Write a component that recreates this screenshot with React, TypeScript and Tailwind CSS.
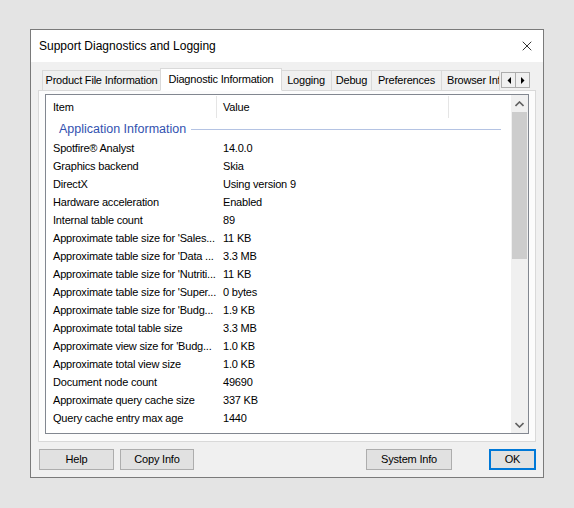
import { X } from 'lucide-react';

type Row = { item: string; value: string };

const rows: Row[] = [
  { item: 'Spotfire® Analyst', value: '14.0.0' },
  { item: 'Graphics backend', value: 'Skia' },
  { item: 'DirectX', value: 'Using version 9' },
  { item: 'Hardware acceleration', value: 'Enabled' },
  { item: 'Internal table count', value: '89' },
  { item: "Approximate table size for 'Sales...", value: '11 KB' },
  { item: "Approximate table size for 'Data ...", value: '3.3 MB' },
  { item: "Approximate table size for 'Nutriti...", value: '11 KB' },
  { item: "Approximate table size for 'Super...", value: '0 bytes' },
  { item: "Approximate table size for 'Budg...", value: '1.9 KB' },
  { item: 'Approximate total table size', value: '3.3 MB' },
  { item: "Approximate view size for 'Budg...", value: '1.0 KB' },
  { item: 'Approximate total view size', value: '1.0 KB' },
  { item: 'Document node count', value: '49690' },
  { item: 'Approximate query cache size', value: '337 KB' },
  { item: 'Query cache entry max age', value: '1440' },
];

const tabs = [
  { label: 'Product File Information', w: 'w-[119px]' },
  { label: 'Diagnostic Information', w: 'w-[122px]', active: true },
  { label: 'Logging', w: 'w-[52px]' },
  { label: 'Debug', w: 'w-[41px]' },
  { label: 'Preferences', w: 'w-[71px]' },
  { label: 'Browser Information', w: 'w-[59px]', clipped: true },
];

function Tab({ label, w, active, clipped }: { label: string; w: string; active?: boolean; clipped?: boolean }) {
  if (active) {
    return (
      <div
        className={`${w} h-[23px] -mb-px -mx-[1px] z-10 bg-white border border-[#d9d9d9] border-b-white flex items-start justify-center pt-[2px] whitespace-nowrap`}
      >
        {label}
      </div>
    );
  }
  return (
    <div
      className={`${w} h-[20px] bg-[#f0f0f0] border border-[#d9d9d9] border-b-0 -ml-px first:ml-0 flex items-center overflow-hidden whitespace-nowrap ${
        clipped ? 'justify-start pl-[5px]' : 'justify-center'
      }`}
    >
      {label}
    </div>
  );
}

function ArrowButton({ dir }: { dir: 'left' | 'right' }) {
  return (
    <div className="w-[15px] h-[16px] border border-[#adadad] bg-[#f0f0f0] flex items-center justify-center">
      <svg width="4" height="7" viewBox="0 0 4 7">
        {dir === 'left' ? <polygon points="4,0 4,7 0.5,3.5" fill="#000" /> : <polygon points="0,0 0,7 3.5,3.5" fill="#000" />}
      </svg>
    </div>
  );
}

function Button({ label, w, primary }: { label: string; w: string; primary?: boolean }) {
  return (
    <div
      className={`${w} h-[21px] flex items-center justify-center bg-[#e1e1e1] ${
        primary ? 'border-2 border-[#0078d7]' : 'border border-[#adadad]'
      }`}
    >
      {label}
    </div>
  );
}

export default function App() {
  return (
    <div
      className="w-[574px] h-[508px] bg-[#e4e4e4] pt-[29px] pl-[30px] text-[11px] tracking-[-0.2px] text-black"
      style={{ fontFamily: '"Liberation Sans", Arial, sans-serif' }}
    >
      <div className="w-[514px] h-[449px] border border-[#7a7a7a] bg-[#f0f0f0] flex flex-col">
        {/* title bar */}
        <div className="h-[32px] bg-white flex items-center justify-between pl-[8px] pr-[8px]">
          <span className="text-[12px] tracking-normal">Support Diagnostics and Logging</span>
          <X className="w-[16px] h-[16px]" strokeWidth={1.2} />
        </div>

        <div className="flex-1 flex flex-col px-[7px] pt-[6px]">
          {/* tab strip */}
          <div className="flex items-end h-[22px] pl-[4px] relative">
            {tabs.map((t) => (
              <Tab key={t.label} {...t} />
            ))}
            <div className="flex ml-[1px] mb-[2px]">
              <ArrowButton dir="left" />
              <div className="-ml-px">
                <ArrowButton dir="right" />
              </div>
            </div>
          </div>

          {/* tab panel */}
          <div className="h-[352px] border border-[#d9d9d9] bg-[#fcfcfc] pt-[3px] px-[6px] pb-[7px]">
            <div className="h-full border border-[#828790] bg-white flex">
              <div className="flex-1 flex flex-col">
                {/* header */}
                <div className="h-[24px] flex items-center">
                  <div className="w-[171px] h-[22px] pl-[7px] flex items-center border-r border-[#e5e5e5]">Item</div>
                  <div className="w-[232px] h-[22px] pl-[6px] flex items-center border-r border-[#e5e5e5]">Value</div>
                </div>
                {/* group */}
                <div className="h-[20px] flex items-center pl-[13px] pr-[10px] gap-[5px]">
                  <span className="text-[12.5px] tracking-normal text-[#3352b0] whitespace-nowrap">Application Information</span>
                  <div className="flex-1 h-px bg-[#b4c3e3]" />
                </div>
                {rows.map((r) => (
                  <div key={r.item} className="h-[18px] flex items-center whitespace-nowrap">
                    <div className="w-[171px] pl-[7px] overflow-hidden">{r.item}</div>
                    <div className="pl-[6px]">{r.value}</div>
                  </div>
                ))}
              </div>

              {/* scrollbar */}
              <div className="w-[17px] bg-[#f0f0f0] flex flex-col">
                <div className="h-[17px] flex items-center justify-center">
                  <svg width="9" height="6" viewBox="0 0 9 6">
                    <polyline points="0.5,5 4.5,1 8.5,5" fill="none" stroke="#606060" strokeWidth="1.6" />
                  </svg>
                </div>
                <div className="h-[147px] mx-[1px] bg-[#cdcdcd]" />
                <div className="flex-1" />
                <div className="h-[17px] flex items-center justify-center">
                  <svg width="9" height="6" viewBox="0 0 9 6">
                    <polyline points="0.5,1 4.5,5 8.5,1" fill="none" stroke="#606060" strokeWidth="1.6" />
                  </svg>
                </div>
              </div>
            </div>
          </div>

          {/* buttons */}
          <div className="flex items-center mt-[7px] pl-[1px]">
            <Button label="Help" w="w-[75px]" />
            <div className="ml-[6px]">
              <Button label="Copy Info" w="w-[74px]" />
            </div>
            <div className="ml-auto">
              <Button label="System Info" w="w-[86px]" />
            </div>
            <div className="ml-[37px]">
              <Button label="OK" w="w-[47px]" primary />
            </div>
          </div>
        </div>
      </div>
    </div>
  );
}
